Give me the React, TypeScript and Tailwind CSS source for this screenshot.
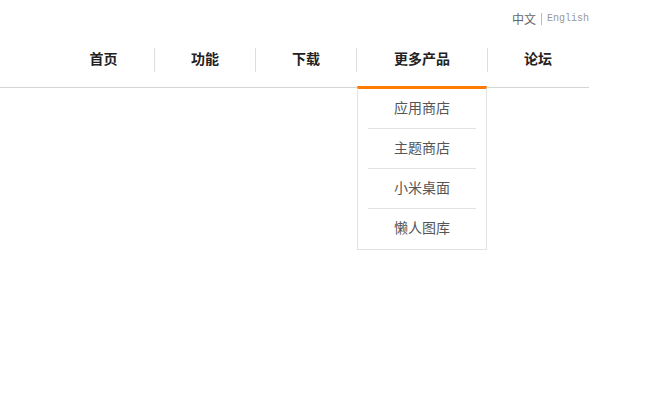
const navItems = [
  { label: "首页", width: "w-[101px]" },
  { label: "功能", width: "w-[101px]" },
  { label: "下载", width: "w-[101px]" },
  { label: "更多产品", width: "w-[131px]", active: true },
  { label: "论坛", width: "w-[101px]" },
]

const moreProducts = ["应用商店", "主题商店", "小米桌面", "懒人图库"]

const App = () => {
  return (
    <div className="h-[400px] w-[650px] bg-white font-['Noto_Sans_CJK_SC',sans-serif]">
      <div className="w-[589px]">
        {/* Language switch */}
        <div className="flex h-[37px] items-center justify-end text-[12px] leading-none">
          <span className="text-[#666]">中文</span>
          <span className="mx-[5px] h-[12px] w-px bg-[#bbb]" />
          <span className="font-['Liberation_Mono',monospace] text-[10px] text-[#999]">
            English
          </span>
        </div>

        {/* Main nav */}
        <div className="flex justify-end border-b border-[#d4d4d4] pb-[15px] pr-px pt-[11px]">
          {navItems.map((item, i) => (
            <div
              key={item.label}
              className={`relative flex h-[24px] items-center justify-center text-[14px] font-bold text-[#222] ${item.width} ${
                i > 0 ? "border-l border-[#dedede]" : ""
              }`}
            >
              <span className="-mt-[3px]">{item.label}</span>
              {item.active && (
                <div className="absolute left-0 top-[38px] z-10 w-[130px] border-x border-b border-t-[3px] border-[#e2e2e2] border-t-[#ff7a00] bg-white pb-px">
                  {moreProducts.map((p, j) => (
                    <div key={p}>
                      {j > 0 && <div className="mx-[10px] h-px bg-[#e2e2e2]" />}
                      <div className="flex h-[39px] items-center justify-center text-[14px] font-normal text-[#555]">
                        <span className="-mt-[2px]">{p}</span>
                      </div>
                    </div>
                  ))}
                </div>
              )}
            </div>
          ))}
        </div>
      </div>
    </div>
  )
}

export default App
